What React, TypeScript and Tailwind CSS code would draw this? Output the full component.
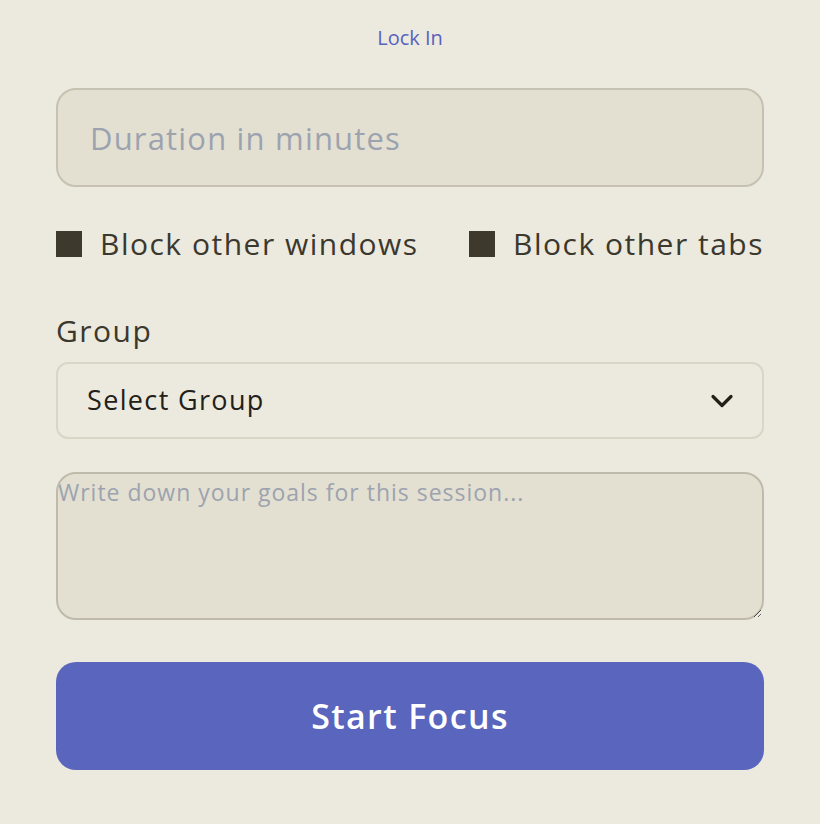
import { useState } from "react";

const FONT = "font-['Open_Sans',sans-serif]";

const BlockOption = ({ label }: { label: string }) => (
  <label className="flex items-center gap-[18px] cursor-pointer">
    <span className="w-[26px] h-[26px] bg-[#3d3a2d] shrink-0" />
    <span className="text-[30px] leading-10 tracking-[0.05em] text-[#3b382d]">{label}</span>
  </label>
);

export default function App() {
  const [duration, setDuration] = useState("");
  const [goals, setGoals] = useState("");

  return (
    <div className={`min-h-screen bg-[#ece9df] ${FONT}`}>
      <div className="px-[56px] pt-[26px] flex flex-col">
        <p className="text-center text-[20px] leading-6 text-[#5a62bd]">Lock In</p>

        <input
          value={duration}
          onChange={(e) => setDuration(e.target.value)}
          placeholder="Duration in minutes"
          className="mt-[38px] h-[99px] w-full rounded-[20px] border-2 border-[#c6c1b1] bg-[#e3e0d2] px-[32px] text-[31px] tracking-[0.038em] text-[#3b382d] placeholder:text-[#9ca3af] outline-none"
        />

        <div className="mt-[37px] flex items-center justify-between">
          <BlockOption label="Block other windows" />
          <BlockOption label="Block other tabs" />
        </div>

        <p className="mt-[47px] text-[30px] leading-10 tracking-[0.05em] text-[#3b382d]">Group</p>

        <button className="mt-[11px] h-[77px] w-full rounded-[12px] border-2 border-[#d9d5c7] bg-[#ece9df] pl-[29px] pr-[28px] flex items-center justify-between">
          <span className="text-[27px] tracking-[0.05em] text-[#222018]">Select Group</span>
          <svg width="24" height="16" viewBox="0 0 24 16" fill="none">
            <path d="M3 3.5 12 12.5 21 3.5" stroke="#222018" strokeWidth="3.2" strokeLinecap="round" strokeLinejoin="round" />
          </svg>
        </button>

        <textarea
          value={goals}
          onChange={(e) => setGoals(e.target.value)}
          placeholder="Write down your goals for this session..."
          className="mt-[33px] h-[148px] w-full rounded-[20px] border-2 border-[#bfbaaa] bg-[#e3e0d2] text-[23px] leading-[36px] tracking-[0.043em] text-[#3b382d] placeholder:text-[#9ca3af] outline-none"
        />

        <button className="mt-[42px] h-[108px] w-full rounded-[20px] bg-[#5a65be] text-white text-[34px] font-semibold tracking-[0.04em]">
          Start Focus
        </button>

        <p className="mt-[46px] text-center text-[22px] leading-8 text-[#5b584c]">
          Recent sessions
        </p>
      </div>
    </div>
  );
}
